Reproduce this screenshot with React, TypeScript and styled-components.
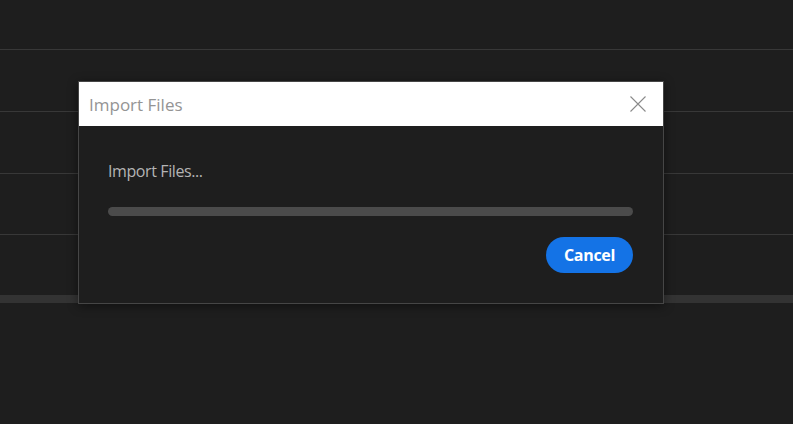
import React from "react";
import styled, { createGlobalStyle } from "styled-components";

const Global = createGlobalStyle`
  html, body { margin: 0; padding: 0; background: #1e1e1e; }
  #root { width: 793px; height: 424px; }
`;

const Page = styled.div`
  position: relative;
  width: 793px;
  height: 424px;
  background: #1e1e1e;
  overflow: hidden;
  display: flex;
  flex-direction: column;
`;

const Row = styled.div<{ $h: number }>`
  height: ${(p) => p.$h}px;
  border-bottom: 1px solid #383838;
  flex-shrink: 0;
`;

const Spacer = styled.div`
  height: 60px;
  flex-shrink: 0;
`;

const Track = styled.div`
  height: 8px;
  background: #333333;
  flex-shrink: 0;
`;

const Dialog = styled.div`
  position: absolute;
  left: 78px;
  top: 81px;
  width: 584px;
  height: 221px;
  border: 1px solid #464646;
  background: #1e1e1e;
  box-shadow: 0 2px 10px rgba(0, 0, 0, 0.45);
  display: flex;
  flex-direction: column;
`;

const Header = styled.div`
  height: 44px;
  background: #ffffff;
  display: flex;
  align-items: center;
  justify-content: space-between;
  padding: 0 17px 0 10px;
`;

const Title = styled.span`
  font-family: "Open Sans", "Noto Sans", sans-serif;
  font-size: 17px;
  color: #949494;
  letter-spacing: 0;
`;

const Close = styled.button`
  width: 16px;
  height: 16px;
  padding: 0;
  border: none;
  background: transparent;
  display: flex;
  cursor: pointer;
`;

const Body = styled.div`
  flex: 1;
  display: flex;
  flex-direction: column;
  padding: 35px 30px 0 29px;
`;

const Status = styled.div`
  font-family: "Open Sans", "Noto Sans", sans-serif;
  font-size: 16px;
  color: #b4b4b4;
  line-height: 20px;
  letter-spacing: -0.4px;
`;

const Progress = styled.div`
  margin-top: 26px;
  height: 9px;
  border-radius: 5px;
  background: #4b4b4b;
`;

const Footer = styled.div`
  display: flex;
  justify-content: flex-end;
  margin-top: 21px;
`;

const Button = styled.button`
  width: 87px;
  height: 36px;
  border-radius: 18px;
  border: none;
  background: #1473e6;
  color: #ffffff;
  font-family: "Open Sans", "Noto Sans", sans-serif;
  font-weight: 700;
  font-size: 16px;
  letter-spacing: -0.3px;
  cursor: pointer;
`;

export default function App() {
  return (
    <>
      <Global />
      <Page>
        <Row $h={49} />
        <Row $h={61} />
        <Row $h={61} />
        <Row $h={60} />
        <Spacer />
        <Track />
        <Dialog>
          <Header>
            <Title>Import Files</Title>
            <Close aria-label="Close">
              <svg width="16" height="16" viewBox="0 0 16 16">
                <path d="M0.5 0.5 L15.5 15.5 M15.5 0.5 L0.5 15.5" stroke="#8a8a8a" strokeWidth="1.1" fill="none" />
              </svg>
            </Close>
          </Header>
          <Body>
            <Status>Import Files...</Status>
            <Progress />
            <Footer>
              <Button>Cancel</Button>
            </Footer>
          </Body>
        </Dialog>
      </Page>
    </>
  );
}
